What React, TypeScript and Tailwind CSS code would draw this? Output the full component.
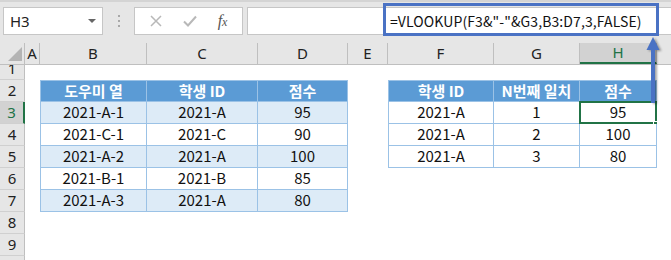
import React from 'react';

const UI = "font-['Noto_Sans','Open_Sans',sans-serif]";
const CELL = "font-['Noto_Sans_CJK_KR','Noto_Sans',sans-serif]";

const COLS = ['', 'A', 'B', 'C', 'D', 'E', 'F', 'G', 'H', ''];
const W = [
  'w-[25px]',
  'w-[15px]',
  'w-[107px]',
  'w-[111px]',
  'w-[90px]',
  'w-[40px]',
  'w-[106px]',
  'w-[86px]',
  'w-[77px]',
  'w-[14px]',
];

const left: string[][] = [
  ['도우미 열', '학생 ID', '점수'],
  ['2021-A-1', '2021-A', '95'],
  ['2021-C-1', '2021-C', '90'],
  ['2021-A-2', '2021-A', '100'],
  ['2021-B-1', '2021-B', '85'],
  ['2021-A-3', '2021-A', '80'],
];

const right: string[][] = [
  ['학생 ID', 'N번째 일치', '점수'],
  ['2021-A', '1', '95'],
  ['2021-A', '2', '100'],
  ['2021-A', '3', '80'],
];

function cellFor(row: number, col: number) {
  // left table B2:D7
  if (col >= 2 && col <= 4 && row >= 2 && row <= 7) {
    const head = row === 2;
    const band = row % 2 === 1;
    return {
      text: left[row - 2][col - 2],
      cls: [
        'border-r border-b border-[#9bc2e6]',
        col === 2 ? 'border-l' : '',
        head ? 'border-t bg-[#5b9bd5] text-white font-bold' : band ? 'bg-[#ddebf7]' : 'bg-white',
      ].join(' '),
    };
  }
  // right table F2:H5
  if (col >= 6 && col <= 8 && row >= 2 && row <= 5) {
    const head = row === 2;
    return {
      text: right[row - 2][col - 6],
      cls: [
        'border-r border-b border-[#9bc2e6]',
        col === 6 ? 'border-l' : '',
        head ? 'border-t bg-[#5b9bd5] text-white font-bold' : 'bg-white',
      ].join(' '),
    };
  }
  return { text: '', cls: 'bg-white' };
}

function Row({ n, h, label = true }: { n: number; h: string; label?: boolean }) {
  const active = n === 3;
  return (
    <div className={`flex ${h}`}>
      <div
        className={`${W[0]} shrink-0 flex flex-col justify-end ${UI} text-[15px] border-b border-[#d0d0d0] ${
          active
            ? 'bg-[#d2d2d2] text-[#217346] border-r-2 border-r-[#217346]'
            : 'bg-[#e6e6e6] text-[#222] border-r border-r-[#bfbfbf]'
        } overflow-hidden leading-none`}
      >
        <div className="h-[21px] shrink-0 flex items-center justify-center">{label ? n : ''}</div>
      </div>
      {COLS.slice(1).map((_, i) => {
        const col = i + 1;
        const c = cellFor(n, col);
        const sel = n === 3 && col === 8;
        return (
          <div
            key={col}
            className={`${W[col]} shrink-0 relative flex items-center justify-center ${CELL} text-[15px] text-[#111] ${c.cls}`}
          >
            {c.text}
            {sel && (
              <>
                <div className="absolute -left-px -top-px -right-px -bottom-px border-2 border-[#217346]" />
                <div className="absolute -right-[3px] -bottom-[4px] w-[6px] h-[6px] bg-[#217346] border border-white" />
              </>
            )}
          </div>
        );
      })}
    </div>
  );
}

function Arrow() {
  return (
    <svg
      className="absolute left-[640px] top-[34px] drop-shadow-[2px_1px_1px_rgba(0,0,0,0.35)]"
      width="26"
      height="72"
      viewBox="0 0 26 72"
    >
      <rect x="11" y="13" width="4" height="56" fill="#4a72c4" />
      <polygon points="13,3 6.5,16 19.5,16" fill="#4a72c4" />
    </svg>
  );
}

export default function App() {
  return (
    <div className="relative w-[671px] h-[260px] overflow-hidden bg-white">
      {/* formula bar */}
      <div className={`h-[43px] bg-[#e6e6e6] border-t-2 border-[#d4d4d4] flex items-start pt-[5px] ${UI}`}>
        <div className="ml-[3px] w-[100px] h-[28px] bg-white border border-[#c6c6c6] flex items-center justify-between pl-[6px] pr-[6px]">
          <span className="text-[15px] text-[#222]">H3</span>
          <span className="w-0 h-0 border-l-[4px] border-r-[4px] border-t-[4px] border-l-transparent border-r-transparent border-t-[#666]" />
        </div>
        <div className="w-[31px] h-[28px] flex flex-col items-center justify-center gap-[3px]">
          <span className="w-[2px] h-[2px] bg-[#a8a8a8]" />
          <span className="w-[2px] h-[2px] bg-[#a8a8a8]" />
          <span className="w-[2px] h-[2px] bg-[#a8a8a8]" />
        </div>
        <div className="w-[109px] h-[28px] bg-white border border-[#c6c6c6] flex items-center justify-around px-[4px]">
          <svg width="12" height="12" viewBox="0 0 12 12">
            <path d="M1 1L11 11M11 1L1 11" stroke="#b8b8b8" strokeWidth="1.5" />
          </svg>
          <svg width="14" height="12" viewBox="0 0 14 12">
            <path d="M1 6.5L5 10.5L13 1.5" stroke="#b8b8b8" strokeWidth="2" fill="none" />
          </svg>
          <span className="font-['Liberation_Serif',serif] italic text-[16px] text-[#555] leading-none">
            f<span className="text-[12px]">x</span>
          </span>
        </div>
        <div className="ml-[4px] flex-1 h-[28px] bg-white border-l border-y border-[#c6c6c6] flex items-center">
          <span className={`ml-[142px] ${CELL} text-[14px] tracking-[0.1px] text-[#111] whitespace-nowrap`}>
            =VLOOKUP(F3&amp;"-"&amp;G3,B3:D7,3,FALSE)
          </span>
        </div>
      </div>

      {/* column headers */}
      <div className={`flex h-[22px] bg-[#e6e6e6] border-b border-[#bfbfbf] ${UI} text-[15px] text-[#222]`}>
        {COLS.map((c, i) => (
          <div
            key={i}
            className={`${W[i]} shrink-0 relative flex items-center justify-center leading-none ${
              c === 'H'
                ? 'bg-[#d2d2d2] text-[#217346] border-b-2 border-[#217346] border-r border-r-[#bfbfbf]'
                : i < 9
                ? 'border-r border-[#bfbfbf]'
                : ''
            }`}
          >
            {i === 0 ? (
              <svg className="absolute left-[8px] top-[4px]" width="14" height="14" viewBox="0 0 14 14">
                <polygon points="14,0 14,14 0,14" fill="#b4b4b4" />
              </svg>
            ) : (
              c
            )}
          </div>
        ))}
      </div>

      {/* sheet rows */}
      <Row n={1} h="h-[15px]" />
      {[2, 3, 4, 5, 6, 7, 8, 9].map((n) => (
        <Row key={n} n={n} h="h-[22px]" />
      ))}
      <Row n={10} h="h-[22px]" label={false} />

      {/* annotation overlays */}
      <div className="absolute left-[383px] top-[3px] w-[276px] h-[33px] border-[3px] border-[#4a72c4]" />
      <Arrow />
    </div>
  );
}
